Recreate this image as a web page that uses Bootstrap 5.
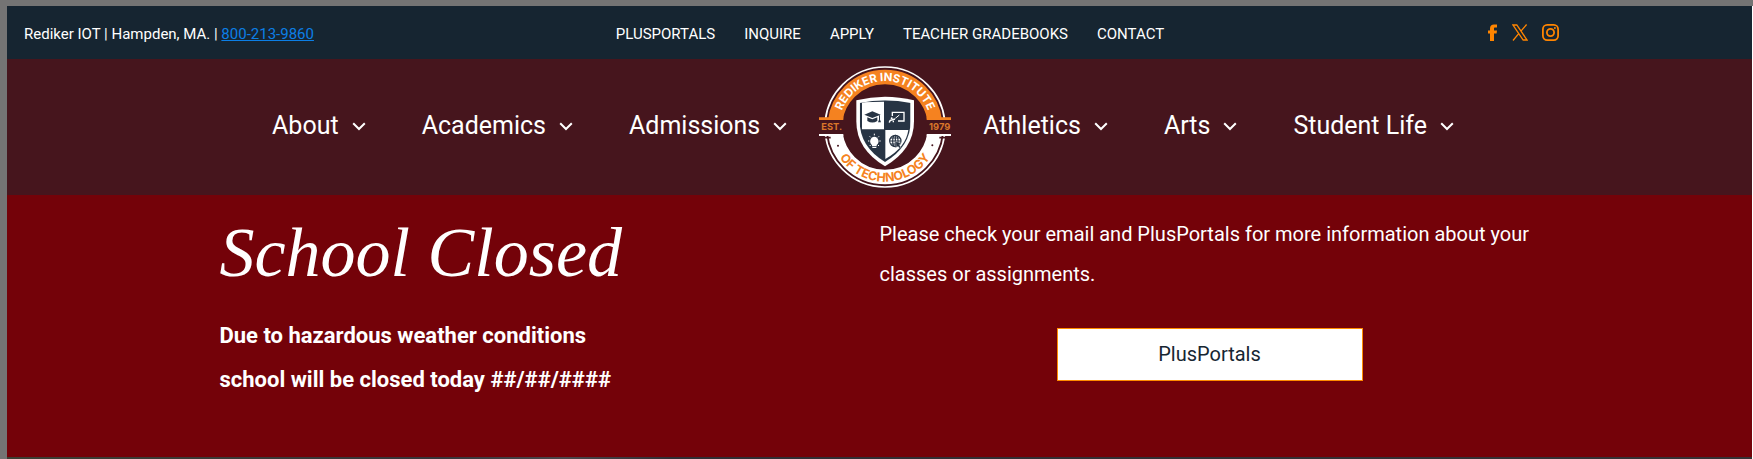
<!DOCTYPE html>
<html lang="en">
<head>
<meta charset="utf-8">
<meta name="viewport" content="width=device-width, initial-scale=1">
<title>Rediker Institute of Technology</title>
<link href="https://cdn.jsdelivr.net/npm/bootstrap@5.3.0/dist/css/bootstrap.min.css" rel="stylesheet">
<style>
  body { font-family: Roboto, "Liberation Sans", sans-serif; background: #747474; }
  .site-frame { padding: 6px 0 0 7px; }
  .site-body { border-right: 1px solid #fff; }
  .top-bar { background: #162531; font-size: 15px; line-height: 20px; min-height: 53px; padding-top: 3px; }
  .top-bar .contact-line { padding-left: 17px; }
  .top-bar .contact-line a { color: #0c7fe6; }
  .top-menu { padding-right: 8px; }
  .top-menu li { margin-left: 29px; }
  .social-links { gap: 14px; padding: 0 193px 3px 0; }
  .main-nav { background: #46151d; padding-right: 33px; }
  .main-nav ul { gap: 56px; }
  .main-nav .nav-group-gap { gap: 23px; }
  .main-nav ul a { font-size: 25px; line-height: 32px; gap: 13px; padding-bottom: 2px; }
  .notice { background: #740209; padding: 16px 0 55px; }
  .notice .container { max-width: 1320px; }
  .notice h1 { font: italic 400 70px/84px "Liberation Serif", serif; margin: 0 0 19px; }
  .notice .lead-line { font-size: 22px; line-height: 44px; font-weight: 700; }
  .notice .info-line { font-size: 20px; line-height: 40px; margin: 3px 0 34px; }
  .btn-portal { width: 306px; font-size: 20px; line-height: 39px; --bs-btn-color: #172632; --bs-btn-bg: #fff; --bs-btn-border-color: #ff8c00; --bs-btn-hover-color: #172632; --bs-btn-hover-bg: #fff4e5; --bs-btn-hover-border-color: #ff8c00; }
  .photo-strip { background: linear-gradient(90deg, #3c3e33, #37353a 25%, #4b474b 32%, #302e34 38%, #353235); min-height: 2px; }
</style>
</head>
<body>
<div class="site-frame min-vh-100 d-flex">
<div class="site-body flex-grow-1 d-flex flex-column">
  <header>
    <div class="top-bar row g-0 align-items-center text-white">
      <div class="contact-line col-4">Rediker IOT | Hampden, MA. | <a href="tel:8002139860">800-213-9860</a></div>
      <div class="col-4">
        <ul class="top-menu list-unstyled d-flex justify-content-center text-nowrap mb-0">
          <li><a class="text-white text-decoration-none" href="#">PLUSPORTALS</a></li>
          <li><a class="text-white text-decoration-none" href="#">INQUIRE</a></li>
          <li><a class="text-white text-decoration-none" href="#">APPLY</a></li>
          <li><a class="text-white text-decoration-none" href="#">TEACHER GRADEBOOKS</a></li>
          <li><a class="text-white text-decoration-none" href="#">CONTACT</a></li>
        </ul>
      </div>
      <div class="social-links col-4 d-flex justify-content-end align-items-center">
        <a href="#" aria-label="Facebook" class="d-flex"><svg width="11" height="17" viewBox="0 0 11 17" fill="#ff8500"><path d="M3 17V9.500H1V6.500H3V4.500C3 2 4.500 .5 7 .5H10V3.500H8C7.200 3.500 7 3.900 7 4.600V6.500H10L9.600 9.500H7V17Z"/></svg></a>
        <a href="#" aria-label="X" class="d-flex"><svg width="16" height="17" viewBox="0 0 16 17" fill="none" stroke="#ff8500"><path d="M1 1H4.800L15 16H11.200ZM14.600 .5L8.700 7.400M6.900 9.400L1 16.500" stroke-width="1.300"/></svg></a>
        <a href="#" aria-label="Instagram" class="d-flex"><svg width="17" height="17" viewBox="0 0 17 17" fill="none" stroke="#ff8500" stroke-width="1.800"><rect x=".9" y=".9" width="15.200" height="15.200" rx="4.300"/><circle cx="8.500" cy="8.500" r="3.600"/><circle cx="12.900" cy="4.100" r="1" fill="#ff8500" stroke="none"/></svg></a>
      </div>
    </div>

    <svg class="d-none"><symbol id="chevron" viewBox="0 0 14 9"><path d="M1.200 1.200L7 7L12.800 1.200" fill="none" stroke="#fff" stroke-width="2"/></symbol></svg>

    <nav class="main-nav" aria-label="Main">
      <div class="nav-group-gap d-flex justify-content-center align-items-center text-nowrap">
        <ul class="list-unstyled d-flex mb-0">
          <li><a class="d-flex align-items-center text-white text-decoration-none" href="#">About<svg width="14" height="9"><use href="#chevron"/></svg></a></li>
          <li><a class="d-flex align-items-center text-white text-decoration-none" href="#">Academics<svg width="14" height="9"><use href="#chevron"/></svg></a></li>
          <li><a class="d-flex align-items-center text-white text-decoration-none" href="#">Admissions<svg width="14" height="9"><use href="#chevron"/></svg></a></li>
        </ul>
        <a href="#" class="d-flex" aria-label="Rediker Institute of Technology home">
          <svg width="150" height="136" viewBox="0 3 450 408" font-family="Inter, sans-serif" font-weight="700">
            <defs>
              <clipPath id="upper"><rect width="450" height="186"/></clipPath>
              <clipPath id="lower"><rect y="228" width="450" height="190"/></clipPath>
              <clipPath id="shield"><path d="M225 127Q186 127 149 135V190Q149 266 225 312Q302 266 302 190V135Q264 127 225 127Z"/></clipPath>
              <path id="arcTop" d="M87 207A138 138 0 0 1 363 207"/>
              <path id="arcBottom" d="M61 207A164 164 0 0 0 389 207"/>
            </defs>
            <g clip-path="url(#upper)" fill="none">
              <circle cx="225" cy="207" r="180" stroke="#fff" stroke-width="5"/>
              <circle cx="225" cy="207" r="150" stroke="#f58220" stroke-width="44"/>
            </g>
            <g clip-path="url(#lower)" fill="none" stroke="#fff">
              <circle cx="225" cy="207" r="180" stroke-width="5"/>
              <circle cx="225" cy="207" r="150" stroke-width="44"/>
            </g>
            <path d="M27 178H100V186H27ZM350 178H423V186H350Z" fill="#f58220"/>
            <path d="M27 228H100V234H27ZM350 228H423V234H350Z" fill="#fff"/>
            <path d="M42 239H62M388 239H408" stroke="#46151d" stroke-width="5"/>
            <text font-size="34" fill="#fff" text-anchor="middle"><textPath href="#arcTop" startOffset="50%">REDIKER INSTITUTE</textPath></text>
            <text font-size="37" fill="#f58220" text-anchor="middle"><textPath href="#arcBottom" startOffset="50%">OF TECHNOLOGY</textPath></text>
            <text x="34" y="217" font-size="28" fill="#d9762a">EST.</text>
            <text x="421" y="217" font-size="28" fill="#d9762a" text-anchor="end">1979</text>
            <circle cx="84" cy="263" r="3" fill="#46151d"/><circle cx="367" cy="262" r="3" fill="#46151d"/>
            <path d="M225 116Q182 116 139 127V190Q139 274 225 325Q312 274 312 190V127Q268 116 225 116Z" fill="#fff"/>
            <g clip-path="url(#shield)">
              <path d="M149 120H302V320H149Z" fill="#273444"/>
              <path d="M156 133Q190 131 222 131V214H156ZM226 216H295Q288 268 226 303Z" fill="#fff"/>
            </g>
            <g fill="#273444"><path d="M163 170L187 160L212 170L187 180Z"/><path d="M172 178L187 184L202 178V189Q187 198 172 189Z"/><path d="M207 172H210V185L213 193H204L207 185Z"/></g>
            <g fill="none" stroke="#fff" stroke-width="4"><path d="M247 174V163H282V189H264"/><path d="M256 181L268 171" stroke-width="3"/><circle cx="245" cy="181" r="3" fill="#fff" stroke="none"/><path d="M238 194Q239 186 245 186L255 183M250 193V188"/></g>
            <g fill="#fff"><path d="M193 236A14 14 0 0 0 186 261V265H200V261A14 14 0 0 0 193 236Z"/><path d="M187 267H199V270H187Z"/><path d="M193 227V232M174 249H178M208 249H212M179 235L182 238M207 235L204 238M179 264L182 261M207 264L204 261" stroke="#fff" stroke-width="3"/></g>
            <g fill="none" stroke="#273444" stroke-width="3.500"><circle cx="256" cy="249" r="17"/><ellipse cx="256" cy="249" rx="8" ry="17"/><path d="M239 249H273M242 240H270M242 258H270M256 232V266"/><path d="M257 250L274 256L267 260L273 268L269 271L263 264L259 269Z" fill="#273444" stroke="#fff" stroke-width="1"/></g>
          </svg>
        </a>
        <ul class="list-unstyled d-flex mb-0">
          <li><a class="d-flex align-items-center text-white text-decoration-none" href="#">Athletics<svg width="14" height="9"><use href="#chevron"/></svg></a></li>
          <li><a class="d-flex align-items-center text-white text-decoration-none" href="#">Arts<svg width="14" height="9"><use href="#chevron"/></svg></a></li>
          <li><a class="d-flex align-items-center text-white text-decoration-none" href="#">Student Life<svg width="14" height="9"><use href="#chevron"/></svg></a></li>
        </ul>
      </div>
    </nav>
  </header>

  <main class="notice text-white">
    <div class="container p-0">
      <div class="row g-0">
        <section class="col-6">
          <h1>School Closed</h1>
          <p class="lead-line mb-0">Due to hazardous weather conditions<br>school will be closed today ##/##/####</p>
        </section>
        <section class="col-6">
          <p class="info-line">Please check your email and PlusPortals for more information about your classes or assignments.</p>
          <div class="text-center"><button type="button" class="btn btn-portal rounded-0">PlusPortals</button></div>
        </section>
      </div>
    </div>
  </main>
  <div class="photo-strip flex-grow-1"></div>
</div>
</div>
<script src="https://cdn.jsdelivr.net/npm/bootstrap@5.3.0/dist/js/bootstrap.bundle.min.js"></script>
</body>
</html>
